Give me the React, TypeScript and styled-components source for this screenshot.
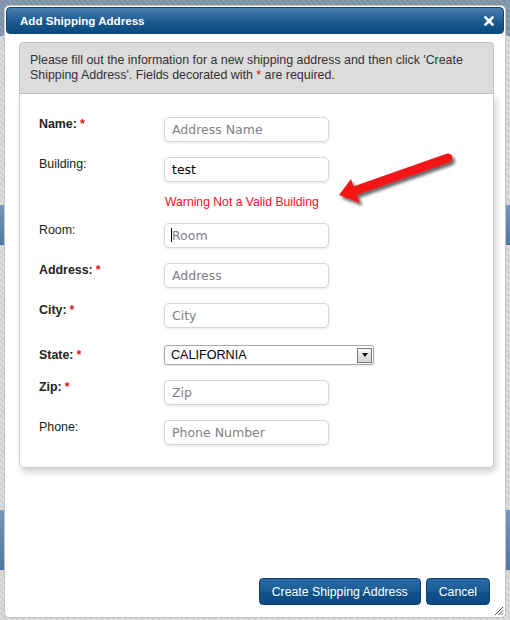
import React from "react";
import styled, { createGlobalStyle } from "styled-components";

const GlobalStyle = createGlobalStyle`
  html, body { margin: 0; padding: 0; }
  body {
    width: 510px;
    height: 620px;
    overflow: hidden;
    font-family: "Liberation Sans", Arial, sans-serif;
    background:
      linear-gradient(#7598bd, #4e77a2) 0 205px / 100% 40px no-repeat,
      linear-gradient(#7598bd, #4e77a2) 0 510px / 100% 60px no-repeat,
      repeating-linear-gradient(45deg, #7a90a6 0 2px, #889db1 2px 4px) 0 0 / 100% 36px no-repeat,
      repeating-linear-gradient(45deg, #d0d0d0 0 2px, #dedede 2px 4px);
  }
`;

const Dialog = styled.div`
  position: absolute;
  left: 4px;
  top: 5px;
  width: 502px;
  height: 613px;
  box-sizing: border-box;
  background: #fff;
  border: 1px solid #c4c4c4;
  border-radius: 5px;
  padding: 1px;
  display: flex;
  flex-direction: column;
`;

const TitleBar = styled.div`
  height: 27px;
  flex: none;
  display: flex;
  align-items: center;
  justify-content: space-between;
  padding: 0 8px 0 13px;
  border-radius: 4px;
  background: linear-gradient(#4a80b0, #1c5a8f 55%, #0b4a80);
  border: 1px solid #0d4575;
  box-sizing: border-box;
`;

const Title = styled.span`
  color: #fff;
  font-weight: bold;
  font-size: 11.6px;
`;

const CloseButton = styled.button`
  width: 12px;
  height: 12px;
  padding: 0;
  margin: 0;
  border: 0;
  background: transparent;
  display: flex;
  align-items: center;
  justify-content: center;
  cursor: pointer;
`;

const Body = styled.div`
  flex: 1;
  display: flex;
  flex-direction: column;
  padding: 8px 10px 0 13px;
`;

const InfoBox = styled.div`
  background: #dcdcdc;
  border: 1px solid #c2c2c2;
  border-radius: 4px 4px 0 0;
  padding: 10px 11px 10px 10px;
  font-size: 12.4px;
  line-height: 15px;
  color: #333;
`;

const Req = styled.span`
  color: #e8101a;
`;

const FormPanel = styled.div`
  border: 1px solid #cfcfcf;
  border-top: 0;
  border-radius: 0 0 5px 5px;
  background: #fff;
  box-shadow: 2px 4px 6px rgba(0, 0, 0, 0.18);
  padding: 23px 20px 22px 19px;
  display: grid;
  grid-template-columns: 125px 1fr;
  row-gap: 15px;
  position: relative;
`;

const Label = styled.label<{ $bold?: boolean }>`
  font-size: 12.4px;
  line-height: 15px;
  color: #222;
  font-weight: ${(p) => (p.$bold ? "bold" : "normal")};
  align-self: start;
`;

const Star = styled.span`
  color: #e8101a;
  font-weight: bold;
  margin-left: 3px;
`;

const Field = styled.div`
  position: relative;
  display: flex;
  align-items: flex-start;
`;

const TextInput = styled.input`
  width: 165px;
  height: 25px;
  box-sizing: border-box;
  border: 1px solid #d6d6d6;
  border-radius: 5px;
  box-shadow: 0 1px 3px rgba(0, 0, 0, 0.1);
  padding: 0 7px;
  font-family: "DejaVu Sans", Verdana, sans-serif;
  font-size: 12.5px;
  color: #000;
  background: #fff;
  outline: none;
  &::placeholder {
    color: #80808a;
  }
`;

const Caret = styled.span`
  position: absolute;
  left: 7px;
  top: 5px;
  width: 1px;
  height: 14px;
  background: #000;
`;

const Warning = styled.div`
  grid-column: 2;
  font-size: 12.2px;
  line-height: 11px;
  color: #f0102a;
  padding-left: 1px;
`;

const SelectRow = styled.div`
  padding-top: 2px;
`;

const SelectBox = styled.div`
  width: 210px;
  height: 20px;
  box-sizing: border-box;
  border: 1px solid #a8a8a8;
  border-radius: 3px;
  box-shadow: 0 1px 2px rgba(0, 0, 0, 0.12);
  display: flex;
  align-items: center;
  justify-content: space-between;
  padding: 0 1px 0 6px;
  font-size: 12.6px;
  color: #000;
  background: #fff;
`;

const ArrowBox = styled.span`
  width: 15px;
  height: 15px;
  box-sizing: border-box;
  border: 1px solid #7a7a7a;
  background: linear-gradient(#f6f6f6, #d4d4d4);
  display: flex;
  align-items: center;
  justify-content: center;
`;

const Triangle = styled.span`
  width: 0;
  height: 0;
  border-left: 3.5px solid transparent;
  border-right: 3.5px solid transparent;
  border-top: 4px solid #111;
`;

const Footer = styled.div`
  flex: 1;
  display: flex;
  justify-content: flex-end;
  align-items: flex-end;
  gap: 5px;
  padding: 0 14px 11px 0;
`;

const Button = styled.button`
  height: 27px;
  padding: 0 12px;
  border: 1px solid #0a4274;
  border-radius: 4px;
  background: linear-gradient(#2a6aa2, #1b5d95 48%, #0f5088 52%, #0c4b82);
  color: #fff;
  font-family: "Liberation Sans", Arial, sans-serif;
  font-size: 12.3px;
  cursor: pointer;
`;

const Grip = styled.svg`
  position: absolute;
  right: 1px;
  bottom: 1px;
`;

const Annotation = styled.svg`
  position: absolute;
  left: 325px;
  top: 139px;
  overflow: visible;
`;

export default function App() {
  return (
    <>
      <GlobalStyle />
      <Dialog>
        <TitleBar>
          <Title>Add Shipping Address</Title>
          <CloseButton aria-label="close">
            <svg width="10" height="10" viewBox="0 0 10 10">
              <path d="M1.5 1.5 L8.5 8.5 M8.5 1.5 L1.5 8.5" stroke="#fff" strokeWidth="2.6" strokeLinecap="square" />
            </svg>
          </CloseButton>
        </TitleBar>
        <Body>
          <InfoBox>
            Please fill out the information for a new shipping address and then click 'Create
            <br />
            Shipping Address'. Fields decorated with <Req>*</Req> are required.
          </InfoBox>
          <FormPanel>
            <Label $bold>
              Name:<Star>*</Star>
            </Label>
            <Field>
              <TextInput placeholder="Address Name" />
            </Field>

            <Label>Building:</Label>
            <Field>
              <TextInput defaultValue="test" />
            </Field>
            <Warning>Warning Not a Valid Building</Warning>

            <Label>Room:</Label>
            <Field>
              <TextInput placeholder="Room" />
              <Caret />
            </Field>

            <Label $bold>
              Address:<Star>*</Star>
            </Label>
            <Field>
              <TextInput placeholder="Address" />
            </Field>

            <Label $bold>
              City:<Star>*</Star>
            </Label>
            <Field>
              <TextInput placeholder="City" />
            </Field>

            <SelectRow>
              <Label $bold>
                State:<Star>*</Star>
              </Label>
            </SelectRow>
            <SelectRow>
              <SelectBox>
                <span>CALIFORNIA</span>
                <ArrowBox>
                  <Triangle />
                </ArrowBox>
              </SelectBox>
            </SelectRow>

            <Label $bold>
              Zip:<Star>*</Star>
            </Label>
            <Field>
              <TextInput placeholder="Zip" />
            </Field>

            <Label>Phone:</Label>
            <Field>
              <TextInput placeholder="Phone Number" />
            </Field>
          </FormPanel>
        </Body>
        <Footer>
          <Button>Create Shipping Address</Button>
          <Button>Cancel</Button>
        </Footer>
        <Grip width="11" height="11" viewBox="0 0 11 11">
          <path d="M10 2 L2 10 M10 5.5 L5.5 10 M10 8.5 L8.5 10" stroke="#444" strokeWidth="1" />
        </Grip>
        <Annotation width="140" height="70" viewBox="0 0 140 70">
          <defs>
            <filter id="sh" x="-20%" y="-40%" width="150%" height="190%">
              <feDropShadow dx="2.5" dy="3" stdDeviation="1.8" floodColor="#000" floodOpacity="0.6" />
            </filter>
          </defs>
          <g filter="url(#sh)">
            <path d="M118 13 L24 46" stroke="#f41414" strokeWidth="9" strokeLinecap="round" fill="none" />
            <path d="M9 50 L21 34 L25 45 L30 58 Z" fill="#f41414" />
          </g>
        </Annotation>
      </Dialog>
    </>
  );
}
